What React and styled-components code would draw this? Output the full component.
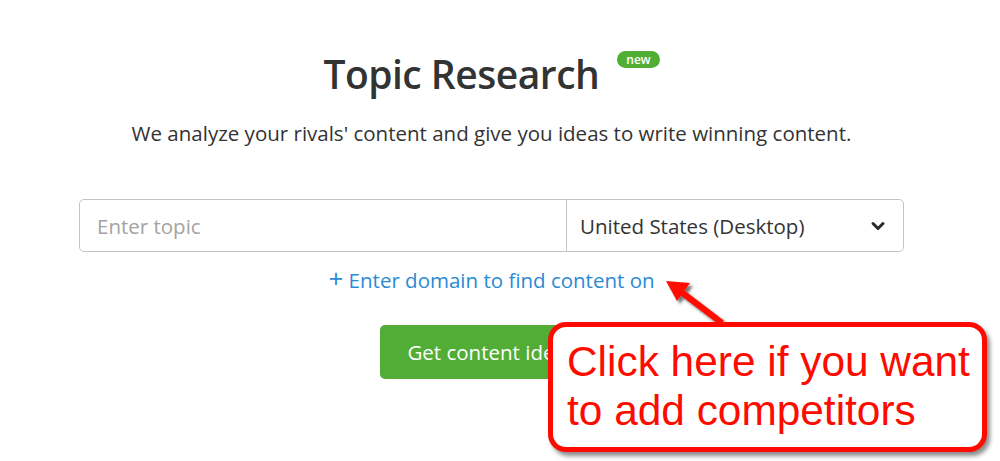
import React from 'react';
import styled, { createGlobalStyle } from 'styled-components';

const GlobalStyle = createGlobalStyle`
  html, body {
    margin: 0;
    padding: 0;
    background: #fff;
  }
  body {
    font-family: 'Open Sans', 'Noto Sans', sans-serif;
    color: #333;
  }
`;

const App = () => {
  return (
    <Page>
      <GlobalStyle />
      <Content>
        <TitleRow>
          <Title>Topic Research</Title>
          <NewBadge>new</NewBadge>
        </TitleRow>
        <Subtitle>We analyze your rivals' content and give you ideas to write winning content.</Subtitle>
        <SearchBar>
          <TopicInput placeholder="Enter topic" />
          <DbSelect>
            <span>United States (Desktop)</span>
            <svg width="16" height="16" viewBox="0 0 16 16">
              <path d="M3 5.5 L8 10.5 L13 5.5" fill="none" stroke="#2b2b2b" strokeWidth="3" strokeLinecap="round" strokeLinejoin="round" />
            </svg>
          </DbSelect>
        </SearchBar>
        <DomainLink>
          <Plus>+</Plus> Enter domain to find content on
        </DomainLink>
        <SubmitButton>Get content ideas</SubmitButton>
      </Content>

      <ArrowSvg width="80" height="60" viewBox="0 0 80 60">
        <defs>
          <filter id="sh" x="-30%" y="-30%" width="160%" height="160%">
            <feGaussianBlur in="SourceAlpha" stdDeviation="1.5" />
            <feOffset dx="3" dy="3" result="b" />
            <feComponentTransfer><feFuncA type="linear" slope="0.55" /></feComponentTransfer>
            <feMerge>
              <feMergeNode />
              <feMergeNode in="SourceGraphic" />
            </feMerge>
          </filter>
        </defs>
        <g filter="url(#sh)">
          <line x1="62" y1="48" x2="20" y2="16" stroke="#fe0b00" strokeWidth="6" />
          <polygon points="6,6 30,8 17,26" fill="#fe0b00" />
        </g>
      </ArrowSvg>

      <Callout>
        Click here if you want<br />to add competitors
      </Callout>
    </Page>
  );
};

export default App;

const Page = styled.div`
  position: relative;
  width: 1000px;
  height: 461px;
  overflow: hidden;
`;

const Content = styled.div`
  width: 825px;
  margin-left: 79px;
  display: flex;
  flex-direction: column;
  align-items: center;
`;

const TitleRow = styled.div`
  display: flex;
  align-items: flex-start;
  gap: 18px;
  margin-top: 48px;
`;

const Title = styled.h1`
  margin: 0;
  font-size: 39px;
  font-weight: 600;
  line-height: 52px;
  color: #333;
  letter-spacing: -0.5px;
`;

const NewBadge = styled.span`
  margin-top: 3px;
  background: #4fae33;
  color: #fff;
  font-size: 12px;
  font-weight: 600;
  line-height: 17px;
  padding: 0 9px;
  border-radius: 9px;
`;

const Subtitle = styled.p`
  margin: 18px 0 0;
  font-size: 20.5px;
  line-height: 30px;
  color: #333;
`;

const SearchBar = styled.div`
  margin-top: 51px;
  width: 100%;
  height: 53px;
  box-sizing: border-box;
  display: flex;
  border: 1px solid #c4c4c4;
  border-radius: 5px;
  background: #fff;
`;

const TopicInput = styled.input`
  flex: 0 0 487px;
  box-sizing: border-box;
  min-width: 0;
  border: none;
  border-right: 1px solid #c4c4c4;
  border-radius: 5px 0 0 5px;
  padding: 0 17px;
  font-family: 'Open Sans', 'Noto Sans', sans-serif;
  font-size: 20.5px;
  color: #333;
  outline: none;
  background: transparent;

  &::placeholder {
    color: #a3a3a3;
  }
`;

const DbSelect = styled.div`
  flex: 1;
  display: flex;
  align-items: center;
  justify-content: space-between;
  padding: 0 17px 0 13px;
  font-size: 20.5px;
  color: #333;
`;

const DomainLink = styled.a`
  margin-top: 14px;
  font-size: 20.5px;
  line-height: 28px;
  color: #2a8ad6;
  cursor: pointer;
`;

const Plus = styled.span`
  font-size: 26px;
  font-weight: 400;
  line-height: 20px;
`;

const SubmitButton = styled.button`
  margin-top: 31px;
  width: 224px;
  height: 54px;
  border: none;
  border-radius: 5px;
  background: #52ad37;
  color: #fff;
  font-family: 'Open Sans', 'Noto Sans', sans-serif;
  font-size: 20.5px;
  font-weight: 500;
`;

const ArrowSvg = styled.svg`
  position: absolute;
  left: 660px;
  top: 275px;
`;

const Callout = styled.div`
  position: absolute;
  left: 548px;
  top: 322px;
  width: 439px;
  height: 130px;
  box-sizing: border-box;
  padding: 10px 0 0 14px;
  border: 5px solid #fe0b00;
  border-radius: 18px;
  background: #fff;
  box-shadow: 3px 4px 4px rgba(0, 0, 0, 0.45);
  font-family: 'Liberation Sans', Arial, sans-serif;
  font-size: 42.4px;
  line-height: 49px;
  color: #fe0b00;
`;
